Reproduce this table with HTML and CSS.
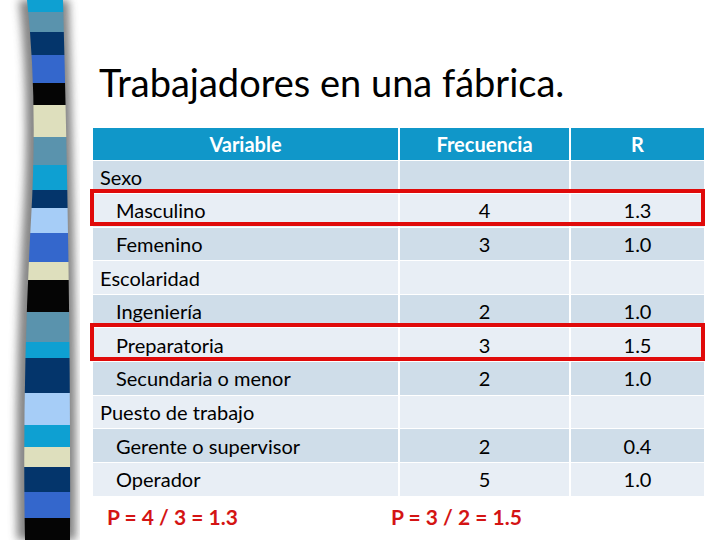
FILE: index.html
```html
<!DOCTYPE html>
<html lang="es">
<head>
<meta charset="utf-8">
<title>Trabajadores en una fábrica.</title>
<link rel="stylesheet" href="styles.css">
</head>
<body>
<div class="slide">
  <aside class="stripe">
    <svg width="80" height="540" viewBox="0 0 80 540" aria-hidden="true">
      <defs>
        <clipPath id="ribbon">
          <path d="M27,0 Q38,100 31,220 Q22,380 25,540 L70,540 Q71,300 63,0 Z"/>
        </clipPath>
        <filter id="blur" x="-50%" y="-10%" width="200%" height="120%">
          <feGaussianBlur stdDeviation="4"/>
        </filter>
      </defs>
      <path d="M19,0 Q30,100 23,220 Q14,380 17,540 L76,540 Q77,300 69,0 Z" fill="#707070" filter="url(#blur)" opacity="0.85"/>
      <g clip-path="url(#ribbon)">
        <rect x="0" y="0" width="80" height="12" fill="#0ea0d2"/>
        <rect x="0" y="12" width="80" height="20" fill="#5a93ad"/>
        <rect x="0" y="32" width="80" height="23" fill="#04356b"/>
        <rect x="0" y="55" width="80" height="28" fill="#3467cc"/>
        <rect x="0" y="83" width="80" height="22" fill="#050505"/>
        <rect x="0" y="105" width="80" height="32" fill="#dedfbd"/>
        <rect x="0" y="137" width="80" height="28" fill="#5a93ad"/>
        <rect x="0" y="165" width="80" height="25" fill="#0ea0d2"/>
        <rect x="0" y="190" width="80" height="18" fill="#04356b"/>
        <rect x="0" y="208" width="80" height="25" fill="#a6cdf7"/>
        <rect x="0" y="233" width="80" height="29" fill="#3467cc"/>
        <rect x="0" y="262" width="80" height="18" fill="#dedfbd"/>
        <rect x="0" y="280" width="80" height="32" fill="#050505"/>
        <rect x="0" y="312" width="80" height="30" fill="#5a93ad"/>
        <rect x="0" y="342" width="80" height="16" fill="#0ea0d2"/>
        <rect x="0" y="358" width="80" height="35" fill="#04356b"/>
        <rect x="0" y="393" width="80" height="32" fill="#a6cdf7"/>
        <rect x="0" y="425" width="80" height="22" fill="#0ea0d2"/>
        <rect x="0" y="447" width="80" height="20" fill="#dedfbd"/>
        <rect x="0" y="467" width="80" height="25" fill="#04356b"/>
        <rect x="0" y="492" width="80" height="26" fill="#3467cc"/>
        <rect x="0" y="518" width="80" height="22" fill="#050505"/>
      </g>
    </svg>
  </aside>
  <main class="content">
    <h1 class="title">Trabajadores en una fábrica.</h1>
    <table class="freq">
      <thead>
        <tr>
          <th class="c-var">Variable</th>
          <th class="c-num">Frecuencia</th>
          <th class="c-r">R</th>
        </tr>
      </thead>
      <tbody>
        <tr class="dark"><td class="grp">Sexo</td><td></td><td></td></tr>
        <tr class="light hl"><td class="sub">Masculino</td><td>4</td><td>1.3</td></tr>
        <tr class="dark"><td class="sub">Femenino</td><td>3</td><td>1.0</td></tr>
        <tr class="light"><td class="grp">Escolaridad</td><td></td><td></td></tr>
        <tr class="dark"><td class="sub">Ingeniería</td><td>2</td><td>1.0</td></tr>
        <tr class="light hl"><td class="sub">Preparatoria</td><td>3</td><td>1.5</td></tr>
        <tr class="dark"><td class="sub">Secundaria o menor</td><td>2</td><td>1.0</td></tr>
        <tr class="light"><td class="grp">Puesto de trabajo</td><td></td><td></td></tr>
        <tr class="dark"><td class="sub">Gerente o supervisor</td><td>2</td><td>0.4</td></tr>
        <tr class="light"><td class="sub">Operador</td><td>5</td><td>1.0</td></tr>
      </tbody>
    </table>
    <div class="formulas">
      <span class="f1">P = 4 / 3 = 1.3</span>
      <span class="f2">P = 3 / 2 = 1.5</span>
    </div>
  </main>
</div>
</body>
</html>
```

FILE: styles.css
```css
* { box-sizing: border-box; }
html, body { margin: 0; padding: 0; background: #fff; }
body { font-family: "Lato", "Open Sans", sans-serif; color: #000; }

.slide {
  width: 720px;
  height: 540px;
  display: flex;
  overflow: hidden;
}

.stripe { width: 80px; flex: none; }
.stripe svg { display: block; }

.content {
  flex: 1;
  padding-left: 13px;
  display: flex;
  flex-direction: column;
}

.title {
  margin: 60px 0 0 6px;
  font-weight: 400;
  font-size: 38px;
  line-height: 44px;
  height: 68px;
}

.freq {
  border-collapse: collapse;
  width: 611px;
  table-layout: fixed;
  font-size: 20px;
}

.freq th, .freq td {
  padding: 0;
  text-align: center;
  vertical-align: middle;
  border-left: 2px solid #fff;
  border-top: 1px solid #fff;
}
.freq th:first-child, .freq td:first-child { border-left: 0; }

.c-var { width: 306px; }
.c-num { width: 171px; }
.c-r { width: 134px; }

.freq thead tr { height: 32px; }
.freq th {
  background: #1097c9;
  color: #fff;
  font-weight: 700;
  border-top: 0;
}

.freq tbody tr { height: 33.6px; }
.dark td { background: #cfdde9; }
.light td { background: #e8eef5; }

.freq td.grp { text-align: left; padding-left: 7px; }
.freq td.sub { text-align: left; padding-left: 23px; }

.hl { position: relative; }
.hl::after {
  content: "";
  position: absolute;
  left: -3px;
  right: -1px;
  top: -5px;
  bottom: 1px;
  border: 4px solid #e00a0a;
  pointer-events: none;
}

.formulas {
  display: grid;
  grid-template-columns: 284px auto;
  padding: 7px 0 0 14px;
  color: #d41414;
  font-weight: 700;
  font-size: 21px;
  line-height: 28px;
}
```
